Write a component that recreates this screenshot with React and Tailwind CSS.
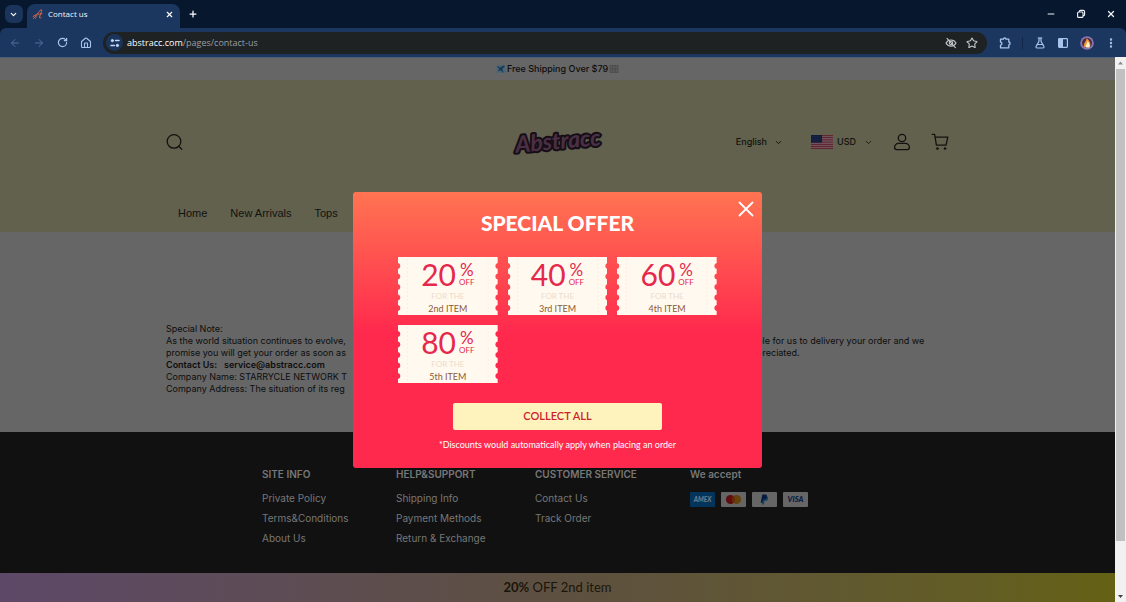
import React from "react";
import {
  ArrowLeft, ArrowRight, RotateCw, House, ChevronDown, Plus, X, Minus,
  Star, FlaskConical, EllipsisVertical, EyeOff,
} from "lucide-react";

const offers = [
  { value: "20", item: "2nd ITEM" },
  { value: "40", item: "3rd ITEM" },
  { value: "60", item: "4th ITEM" },
  { value: "80", item: "5th ITEM" },
];

const footerColumns = [
  { title: "SITE INFO", width: "w-[134px]", links: ["Private Policy", "Terms&Conditions", "About Us"] },
  { title: "HELP&SUPPORT", width: "w-[139px]", links: ["Shipping Info", "Payment Methods", "Return & Exchange"] },
  { title: "CUSTOMER SERVICE", width: "w-[155px]", links: ["Contact Us", "Track Order"] },
];

function BrandMark() {
  return (
    <svg viewBox="0 0 12 12" className="size-3 shrink-0" fill="none" stroke="#d0694a" strokeWidth="1" strokeLinecap="round" strokeLinejoin="round">
      <path d="M1.5 10.5C3.5 9.5 6 3.5 9 1.8C9.8 1.4 10 2.4 9.5 3.6L7.4 9.2C7.2 10.2 8 10.4 9.2 9.4" />
      <path d="M1 8.5C3.5 6.2 7 6 10 5.8" />
      <path d="M3.4 10.8L6.6 4.6" stroke="#8a4d5a" />
    </svg>
  );
}

function BrowserChrome() {
  return (
    <header className="shrink-0 bg-[#07172e] font-['Open_Sans',sans-serif]">
      <div className="flex h-[28px] items-center">
        <div className="flex h-full w-[27px] items-center justify-center">
          <button aria-label="Search tabs" className="flex size-[18px] items-center justify-center rounded-md bg-[#1b345c] text-white">
            <ChevronDown className="size-[9px]" strokeWidth={3} />
          </button>
        </div>
        <div className="flex h-full items-end pt-1">
          <div className="flex h-full w-[153px] items-center gap-1 rounded-t-lg bg-[#1b365f] pr-[6px] pb-1 pl-[5px] text-[8px] text-slate-100">
            <BrandMark />
            <span className="flex-1">Contact us</span>
            <button aria-label="Close tab"><X className="size-[9px] text-white" strokeWidth={3} /></button>
          </div>
        </div>
        <button aria-label="New tab" className="ml-2 text-white"><Plus className="size-[10px]" strokeWidth={3} /></button>
        <div className="ml-auto flex items-center gap-5 pr-[10px] text-slate-100">
          <button aria-label="Minimize"><Minus className="size-[10px]" strokeWidth={2.5} /></button>
          <button aria-label="Restore">
            <svg viewBox="0 0 10 10" className="size-[10px]" fill="none" stroke="currentColor" strokeWidth="1.1">
              <rect x="1.6" y="3" width="5.4" height="5.4" rx="1" />
              <path d="M3.4 3V2.4C3.4 1.8 3.8 1.4 4.4 1.4H7.2C8 1.4 8.6 2 8.6 2.8V5.6C8.6 6.2 8.2 6.6 7.6 6.6H7" />
            </svg>
          </button>
          <button aria-label="Close window"><X className="size-[10px]" strokeWidth={3} /></button>
        </div>
      </div>
      <div className="flex h-[29px] items-center rounded-t-md bg-[#1b365f] pr-[9px] pl-[9px] text-[#a9c4ec]">
        <div className="flex items-center gap-3 pr-[11px]">
          <button aria-label="Back" className="text-[#53709d]"><ArrowLeft className="size-3" strokeWidth={2} /></button>
          <button aria-label="Forward" className="text-[#53709d]"><ArrowRight className="size-3" strokeWidth={2} /></button>
          <button aria-label="Reload"><RotateCw className="size-[11px]" strokeWidth={2.6} /></button>
          <button aria-label="Home"><House className="size-3" strokeWidth={2.2} /></button>
        </div>
        <div className="flex h-[22px] flex-1 items-center rounded-full bg-[#1e2223] pr-[9px] pl-[3px]">
          <button aria-label="Site information" className="mr-1 flex size-[17px] items-center justify-center rounded-full bg-[#1b345c]">
            <svg viewBox="0 0 10 10" className="size-[10px]" fill="none" stroke="#c5daf8" strokeWidth="1.5" strokeLinecap="round">
              <path d="M5.6 2.6H9" /><path d="M1 7.4H4.4" />
              <circle cx="2.4" cy="2.6" r="1.2" fill="#c5daf8" stroke="#c5daf8" strokeWidth=".8" />
              <circle cx="7.4" cy="7.4" r="1.2" fill="#c5daf8" stroke="#c5daf8" strokeWidth=".8" />
            </svg>
          </button>
          <a href="#address" className="flex-1 text-[9px] text-[#9a9fa3]"><span className="text-white">abstracc.com</span>/pages/contact-us</a>
          <div className="flex items-center gap-[9px] text-[#c3c6c8]">
            <button aria-label="Tracking protection">
              <svg viewBox="0 0 12 12" className="size-3" fill="none" stroke="currentColor" strokeWidth="1.1" strokeLinecap="round">
                <path d="M1 6C3 1.9 9 1.9 11 6C9 10.1 3 10.1 1 6Z" />
                <circle cx="6" cy="6" r="1.7" />
                <path d="M2 1.4L10.4 10.6" />
              </svg>
            </button>
            <button aria-label="Bookmark"><Star className="size-3" strokeWidth={2.2} /></button>
          </div>
        </div>
        <div className="flex items-center gap-[11px] pl-3">
          <button aria-label="Extensions">
            <svg viewBox="0 0 12 12" className="size-3" fill="none" stroke="currentColor" strokeWidth="1.3" strokeLinejoin="round">
              <path d="M1.5 2.2H4.4C4.4 .6 7 .6 7 2.2H9.8V5C11.5 5 11.5 7.8 9.8 7.8V10.8H1.5V8.2C3.4 8 3.4 5.2 1.5 5Z" />
            </svg>
          </button>
          <span className="h-3 w-px bg-[#10264a]" />
          <button aria-label="Labs"><FlaskConical className="size-3" strokeWidth={2.4} /></button>
          <button aria-label="Side panel">
            <svg viewBox="0 0 12 12" className="size-3">
              <rect x="1.6" y="1.6" width="8.8" height="8.8" rx=".8" fill="none" stroke="currentColor" strokeWidth="1.2" />
              <path d="M1.6 1.6H6V10.4H1.6Z" fill="currentColor" />
            </svg>
          </button>
          <button aria-label="Profile">
            <svg viewBox="0 0 14 14" className="size-[14px]">
              <circle cx="7" cy="7" r="6.8" fill="#8d75b4" /><circle cx="7" cy="7" r="5" fill="#4a2c3c" />
              <path d="M4 11C3 7 6.4 5.6 6.6 2.2C9 3.6 11.8 8 9.6 11.4Z" fill="#f0943c" />
              <path d="M5.8 11.4C5.2 9 7.4 7.6 7.6 5C9.8 7.6 10.2 10 9.2 11.4Z" fill="#fff3c4" />
            </svg>
          </button>
          <button aria-label="Menu"><EllipsisVertical className="size-3" strokeWidth={2.8} /></button>
        </div>
      </div>
    </header>
  );
}

function Announcement() {
  return (
    <div className="flex h-[23px] items-center justify-center gap-px border-t border-[#4b5d78] text-[9px] font-medium text-[#0d0d0d]">
      <svg viewBox="0 0 10 10" className="size-[10px]">
        <rect x=".5" y="1" width="9" height="8" rx="1" fill="#4f6472" />
        <path d="M1.5 2L4 3.4L7.8 1.6L8.8 2.4L6.2 4.8L7.6 8.4L6.8 8.6L4.6 6L2.8 7.4L2.2 6.6L3.4 4.8L1.2 2.8Z" fill="#123a5c" />
      </svg>
      <span>Free Shipping Over $79</span>
      <svg viewBox="0 0 10 10" className="size-[10px]" stroke="#4c4c4c" strokeWidth=".8" fill="#5b5b5b">
        <rect x="1" y="1.5" width="8" height="7" />
        <path d="M1 5H9M3.6 1.5V8.5M6.4 1.5V8.5" />
      </svg>
    </div>
  );
}

function Flag() {
  return (
    <svg viewBox="0 0 22 14" className="h-[14px] w-[22px]">
      <rect width="22" height="14" fill="#77606a" />
      <path d="M0 .5H22M0 2.7H22M0 4.9H22M0 7.1H22M0 9.3H22M0 11.4H22M0 13.5H22" stroke="#602632" strokeWidth="1.3" />
      <rect width="11" height="7.6" fill="#101c3e" />
      <path d="M1 1.5H10M1.6 3H10M1 4.5H10M1.6 6H10" stroke="#36415c" strokeWidth=".5" strokeDasharray=".6 1" />
    </svg>
  );
}

function Logo() {
  return (
    <a href="#home" aria-label="Abstracc">
      <svg viewBox="0 0 94 44" className="h-11 w-[94px]">
        <text
          x="47" y="29" transform="rotate(-5 47 22)" textAnchor="middle"
          fontFamily="Lato, sans-serif" fontSize="23" fontWeight="700" fontStyle="italic"
          fill="#4a3044" stroke="#170d17" strokeWidth="4" strokeLinejoin="round" paintOrder="stroke"
        >
          Abstracc
        </text>
      </svg>
    </a>
  );
}

function StoreHeader() {
  return (
    <div className="flex h-[152px] flex-col bg-[#61614e] px-[166px] text-[#12120f]">
      <div className="grid h-[124px] grid-cols-3 items-center">
        <button aria-label="Search" className="justify-self-start">
          <svg viewBox="0 0 18 18" className="size-[18px]" fill="none" stroke="currentColor" strokeWidth="1.3" strokeLinecap="round">
            <circle cx="8" cy="8.4" r="6.8" /><path d="M12.8 13.2L15.8 16.4" />
          </svg>
        </button>
        <div className="justify-self-center"><Logo /></div>
        <div className="flex items-center justify-self-end text-[9px] font-medium">
          <button className="mr-7 flex items-center gap-[7px]">English<ChevronDown className="size-[9px]" strokeWidth={2.5} /></button>
          <button className="mr-5 flex items-center gap-1"><Flag />USD<ChevronDown className="ml-1 size-[9px]" strokeWidth={2.2} /></button>
          <button aria-label="Account" className="mr-5">
            <svg viewBox="0 0 18 18" className="size-[18px]" fill="none" stroke="currentColor" strokeWidth="1.3" strokeLinejoin="round">
              <circle cx="9" cy="5" r="3.7" />
              <path d="M5.6 10.4H12.4C14.8 10.4 16.4 12.4 16.4 14.6C16.4 15.8 15.6 16.6 14.4 16.6H3.6C2.4 16.6 1.6 15.8 1.6 14.6C1.6 12.4 3.2 10.4 5.6 10.4Z" />
            </svg>
          </button>
          <button aria-label="Cart">
            <svg viewBox="0 0 18 18" className="size-[18px]" fill="none" stroke="currentColor" strokeWidth="1.3" strokeLinejoin="round" strokeLinecap="round">
              <path d="M1.2 1.4H3.6L5.4 12.2H15L16.8 4.2H4.2" />
              <circle cx="6.4" cy="15.6" r="1" fill="currentColor" strokeWidth=".6" /><circle cx="14" cy="15.6" r="1" fill="currentColor" strokeWidth=".6" />
            </svg>
          </button>
        </div>
      </div>
      <nav className="flex gap-[23px] pl-3 font-['Liberation_Sans',sans-serif] text-[11px] leading-[18px]">
        <a href="#home">Home</a>
        <a href="#new">New Arrivals</a>
        <a href="#tops">Tops</a>
      </nav>
    </div>
  );
}

function Note() {
  return (
    <main className="px-[166px] pt-[91px] pb-[37px] text-[9px] leading-3 text-[#0d0d0d]">
      <p>Special Note:</p>
      <div className="grid grid-cols-[591px_1fr] whitespace-nowrap">
        <p className="overflow-hidden">As the world situation continues to evolve,</p>
        <p>ble for us to delivery your order and we</p>
        <p className="overflow-hidden">promise you will get your order as soon as</p>
        <p>preciated.</p>
      </div>
      <p className="font-semibold">Contact Us:&nbsp;&nbsp; service@abstracc.com</p>
      <p>Company Name: STARRYCLE NETWORK T</p>
      <p>Company Address: The situation of its reg</p>
    </main>
  );
}

function Payments() {
  return (
    <div className="flex gap-[6px]">
      <svg viewBox="0 0 25 15" className="h-[15px] w-[25px]" role="img" aria-label="American Express">
        <rect width="25" height="15" rx="1" fill="#03345c" />
        <text x="12.5" y="10" textAnchor="middle" fontFamily="Lato, sans-serif" fontWeight="900" fontStyle="italic" fontSize="6.5" fill="#6b7d8d">AMEX</text>
      </svg>
      <svg viewBox="0 0 25 15" className="h-[15px] w-[25px]" role="img" aria-label="Mastercard">
        <rect width="25" height="15" rx="1" fill="#666" />
        <circle cx="9.5" cy="7.5" r="4.6" fill="#5f0b10" /><circle cx="15.5" cy="7.5" r="4.6" fill="#66420c" />
        <path d="M12.5 4A4.6 4.6 0 0 1 12.5 11A4.6 4.6 0 0 1 12.5 4Z" fill="#66280a" />
      </svg>
      <svg viewBox="0 0 25 15" className="h-[15px] w-[25px]" role="img" aria-label="PayPal">
        <rect width="25" height="15" rx="1" fill="#666" />
        <path d="M11.5 4.2H14.7C16.9 4.6 16.7 8.6 13.5 9H12.5L11.9 12.6H9.9Z" fill="#174560" />
        <path d="M10.3 2.6H13.5C15.9 2.8 15.5 7 12.5 7.4H11.1L10.5 10.8H8.7Z" fill="#071b40" />
      </svg>
      <svg viewBox="0 0 25 15" className="h-[15px] w-[25px]" role="img" aria-label="Visa">
        <rect width="25" height="15" rx="1" fill="#666" />
        <text x="12.5" y="10.4" textAnchor="middle" fontFamily="Lato, sans-serif" fontWeight="900" fontStyle="italic" fontSize="7.5" fill="#0c1740">VISA</text>
      </svg>
    </div>
  );
}

function Footer() {
  return (
    <footer className="flex flex-1 bg-[#111] pt-[35px] pl-[262px] text-[10px] text-[#777]">
      {footerColumns.map((c) => (
        <section key={c.title} className={c.width}>
          <h2 className="mb-[7px] leading-[14px] font-semibold">{c.title}</h2>
          <ul>
            {c.links.map((l) => <li key={l} className="leading-5"><a href="#footer">{l}</a></li>)}
          </ul>
        </section>
      ))}
      <section>
        <h2 className="mb-[11px] leading-[14px] font-semibold">We accept</h2>
        <Payments />
      </section>
    </footer>
  );
}

function Ticket({ value, item }) {
  return (
    <li className="relative h-[58px]">
      <svg viewBox="0 0 99 58" preserveAspectRatio="none" className="absolute inset-0 size-full">
        <path
          fill="#fff9f0"
          d="M0 0H99V6A3.1 3.1 0 0 0 99 12V16.5A3.1 3.1 0 0 0 99 22.5V27A3.1 3.1 0 0 0 99 33V37.5A3.1 3.1 0 0 0 99 43.5V48A3.1 3.1 0 0 0 99 54V58H0V54A3.1 3.1 0 0 0 0 48V43.5A3.1 3.1 0 0 0 0 37.5V33A3.1 3.1 0 0 0 0 27V22.5A3.1 3.1 0 0 0 0 16.5V12A3.1 3.1 0 0 0 0 6Z"
        />
        <path d="M9.5 2V56M89.5 2V56" stroke="#fdeee0" strokeWidth="1" strokeDasharray="2 2" />
      </svg>
      <div className="relative flex flex-col items-center text-[#e5284c]">
        <div className="flex h-[35px] items-center gap-[3px]">
          <span className="text-[30px] leading-[35px]">{value}</span>
          <span className="flex flex-col items-center">
            <span className="text-[17px] leading-4">%</span>
            <span className="text-[8px] leading-[9px]">OFF</span>
          </span>
        </div>
        <span className="text-[8px] leading-[9px] text-[#ecdccb]">FOR THE</span>
        <span className="text-[9px] leading-[15px] text-[#8c5a32]">{item}</span>
      </div>
    </li>
  );
}

function OfferDialog() {
  return (
    <div className="absolute inset-0 flex items-center justify-center">
      <section
        role="dialog"
        aria-labelledby="offer-title"
        className="relative flex w-[409px] flex-col items-center rounded-[3px] bg-[linear-gradient(180deg,#ff7452_0%,#ff284d_52%)] pt-[17px] pb-4 font-['Lato',sans-serif]"
      >
        <button aria-label="Close" className="absolute top-[9px] right-2 text-white">
          <svg viewBox="0 0 16 16" className="size-4" fill="none" stroke="currentColor" strokeWidth="1.8" strokeLinecap="round"><path d="M1.5 1.5L14.5 14.5M14.5 1.5L1.5 14.5" /></svg>
        </button>
        <h1 id="offer-title" className="text-[21px] leading-7 font-black text-white">SPECIAL OFFER</h1>
        <ul className="mt-5 grid w-[319px] grid-cols-3 gap-x-[10px] gap-y-[10px]">
          {offers.map((o) => <Ticket key={o.value} {...o} />)}
        </ul>
        <button className="mt-5 h-[27px] w-[209px] rounded-[2px] bg-[#fff3bd] text-[11px] font-semibold text-[#cc1f2f]">COLLECT ALL</button>
        <p className="mt-2 text-[9px] leading-[14px] text-white">*Discounts would automatically apply when placing an order</p>
      </section>
    </div>
  );
}

function Scrollbar() {
  return (
    <div aria-hidden="true" className="flex w-[11px] shrink-0 flex-col items-center bg-[#f1f1f1]">
      <svg viewBox="0 0 11 12" className="h-3 w-[11px]"><path d="M3 7.5L5.5 4.5L8 7.5Z" fill="#8b8b8b" /></svg>
      <div className="w-[9px] grow-[472] bg-[#c1c1c1]" />
      <div className="grow-[49]" />
      <svg viewBox="0 0 11 12" className="h-3 w-[11px]"><path d="M3 5L5.5 8L8 5Z" fill="#404040" /></svg>
    </div>
  );
}

export default function App() {
  return (
    <div className="flex h-screen flex-col overflow-hidden">
      <BrowserChrome />
      <div className="flex min-h-0 flex-1">
        <div className="relative flex min-w-0 flex-1 flex-col bg-[#666] font-['Inter',sans-serif]">
          <Announcement />
          <StoreHeader />
          <Note />
          <Footer />
          <div className="flex h-[29px] items-center justify-center bg-linear-to-r from-[#5e4868] via-[#5d5040] to-[#646114] font-['Lato',sans-serif] text-[13px] text-[#1b1509]">
            <span><b>20%</b> OFF 2nd item</span>
          </div>
          <OfferDialog />
        </div>
        <Scrollbar />
      </div>
    </div>
  );
}
